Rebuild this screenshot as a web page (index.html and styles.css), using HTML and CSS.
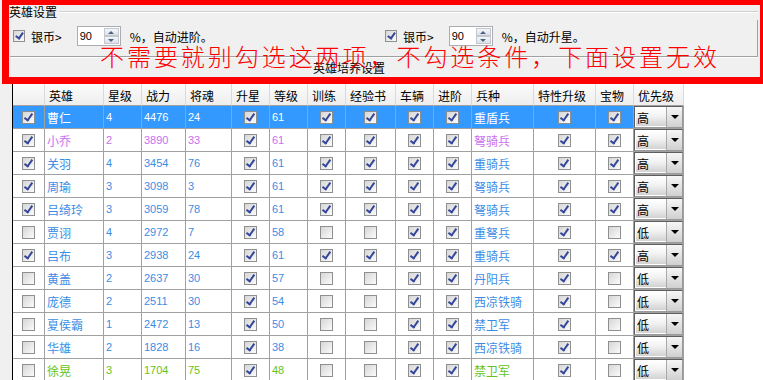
FILE: index.html
```html
<!DOCTYPE html>
<html lang="zh-CN">
<head>
  <meta charset="UTF-8">
  <title>英雄设置</title>
  <link rel="stylesheet" href="styles.css">
</head>
<body>
  <div class="settings">
    <div class="legend-row">
      <span>英雄设置</span>
      <span class="line"></span>
    </div>
    <div class="group-body">
      <div class="option-row">
        <div class="opt-group">
          <span class="cb small on"></span>
          <span class="opt-label">银币&gt;</span>
          <span class="spin"><span class="spin-val">90</span><span class="spin-btns"><i class="up"></i><i class="down"></i></span></span>
          <span class="opt-tail">%，自动进阶。</span>
        </div>
        <div class="opt-group">
          <span class="cb small on"></span>
          <span class="opt-label">银币&gt;</span>
          <span class="spin"><span class="spin-val">90</span><span class="spin-btns"><i class="up"></i><i class="down"></i></span></span>
          <span class="opt-tail">%，自动升星。</span>
        </div>
      </div>
    </div>
    <div class="sep"></div>
    <div class="train-title">英雄培养设置</div>
  </div>

  <div class="grid">
    <div class="row head">
      <div></div><div>英雄</div><div>星级</div><div>战力</div><div>将魂</div><div>升星</div><div>等级</div><div>训练</div><div>经验书</div><div>车辆</div><div>进阶</div><div>兵种</div><div>特性升级</div><div>宝物</div><div>优先级</div>
    </div>

    <div class="row blue sel">
      <div class="c"><span class="cb on"></span></div><div class="t">曹仁</div><div class="n">4</div><div class="n">4476</div><div class="n">24</div>
      <div class="c"><span class="cb on"></span></div><div class="n">61</div>
      <div class="c"><span class="cb on"></span></div><div class="c"><span class="cb on"></span></div><div class="c"><span class="cb on"></span></div><div class="c"><span class="cb on"></span></div>
      <div class="t">重盾兵</div><div class="c"><span class="cb on"></span></div><div class="c"><span class="cb on"></span></div>
      <div class="p"><span class="combo"><span class="combo-val">高</span><span class="combo-btn"></span></span></div>
    </div>
    <div class="row purple">
      <div class="c"><span class="cb on"></span></div><div class="t">小乔</div><div class="n">2</div><div class="n">3890</div><div class="n">33</div>
      <div class="c"><span class="cb on"></span></div><div class="n">61</div>
      <div class="c"><span class="cb on"></span></div><div class="c"><span class="cb on"></span></div><div class="c"><span class="cb on"></span></div><div class="c"><span class="cb on"></span></div>
      <div class="t">弩骑兵</div><div class="c"><span class="cb on"></span></div><div class="c"><span class="cb on"></span></div>
      <div class="p"><span class="combo"><span class="combo-val">高</span><span class="combo-btn"></span></span></div>
    </div>
    <div class="row blue">
      <div class="c"><span class="cb on"></span></div><div class="t">关羽</div><div class="n">4</div><div class="n">3454</div><div class="n">76</div>
      <div class="c"><span class="cb on"></span></div><div class="n">61</div>
      <div class="c"><span class="cb on"></span></div><div class="c"><span class="cb on"></span></div><div class="c"><span class="cb on"></span></div><div class="c"><span class="cb on"></span></div>
      <div class="t">重骑兵</div><div class="c"><span class="cb on"></span></div><div class="c"><span class="cb on"></span></div>
      <div class="p"><span class="combo"><span class="combo-val">高</span><span class="combo-btn"></span></span></div>
    </div>
    <div class="row blue">
      <div class="c"><span class="cb on"></span></div><div class="t">周瑜</div><div class="n">3</div><div class="n">3098</div><div class="n">3</div>
      <div class="c"><span class="cb on"></span></div><div class="n">61</div>
      <div class="c"><span class="cb on"></span></div><div class="c"><span class="cb on"></span></div><div class="c"><span class="cb on"></span></div><div class="c"><span class="cb on"></span></div>
      <div class="t">弩骑兵</div><div class="c"><span class="cb on"></span></div><div class="c"><span class="cb on"></span></div>
      <div class="p"><span class="combo"><span class="combo-val">高</span><span class="combo-btn"></span></span></div>
    </div>
    <div class="row blue">
      <div class="c"><span class="cb on"></span></div><div class="t">吕绮玲</div><div class="n">3</div><div class="n">3059</div><div class="n">78</div>
      <div class="c"><span class="cb on"></span></div><div class="n">61</div>
      <div class="c"><span class="cb on"></span></div><div class="c"><span class="cb on"></span></div><div class="c"><span class="cb on"></span></div><div class="c"><span class="cb on"></span></div>
      <div class="t">弩骑兵</div><div class="c"><span class="cb on"></span></div><div class="c"><span class="cb on"></span></div>
      <div class="p"><span class="combo"><span class="combo-val">高</span><span class="combo-btn"></span></span></div>
    </div>
    <div class="row blue">
      <div class="c"><span class="cb"></span></div><div class="t">贾诩</div><div class="n">4</div><div class="n">2972</div><div class="n">7</div>
      <div class="c"><span class="cb on"></span></div><div class="n">58</div>
      <div class="c"><span class="cb"></span></div><div class="c"><span class="cb"></span></div><div class="c"><span class="cb on"></span></div><div class="c"><span class="cb on"></span></div>
      <div class="t">重弩兵</div><div class="c"><span class="cb on"></span></div><div class="c"><span class="cb"></span></div>
      <div class="p"><span class="combo"><span class="combo-val">低</span><span class="combo-btn"></span></span></div>
    </div>
    <div class="row blue">
      <div class="c"><span class="cb on"></span></div><div class="t">吕布</div><div class="n">3</div><div class="n">2938</div><div class="n">24</div>
      <div class="c"><span class="cb on"></span></div><div class="n">61</div>
      <div class="c"><span class="cb on"></span></div><div class="c"><span class="cb on"></span></div><div class="c"><span class="cb on"></span></div><div class="c"><span class="cb on"></span></div>
      <div class="t">重骑兵</div><div class="c"><span class="cb on"></span></div><div class="c"><span class="cb on"></span></div>
      <div class="p"><span class="combo"><span class="combo-val">高</span><span class="combo-btn"></span></span></div>
    </div>
    <div class="row blue">
      <div class="c"><span class="cb"></span></div><div class="t">黄盖</div><div class="n">2</div><div class="n">2637</div><div class="n">30</div>
      <div class="c"><span class="cb on"></span></div><div class="n">57</div>
      <div class="c"><span class="cb"></span></div><div class="c"><span class="cb"></span></div><div class="c"><span class="cb on"></span></div><div class="c"><span class="cb on"></span></div>
      <div class="t">丹阳兵</div><div class="c"><span class="cb on"></span></div><div class="c"><span class="cb"></span></div>
      <div class="p"><span class="combo"><span class="combo-val">低</span><span class="combo-btn"></span></span></div>
    </div>
    <div class="row blue">
      <div class="c"><span class="cb"></span></div><div class="t">庞德</div><div class="n">2</div><div class="n">2511</div><div class="n">30</div>
      <div class="c"><span class="cb on"></span></div><div class="n">54</div>
      <div class="c"><span class="cb"></span></div><div class="c"><span class="cb"></span></div><div class="c"><span class="cb on"></span></div><div class="c"><span class="cb on"></span></div>
      <div class="t">西凉铁骑</div><div class="c"><span class="cb on"></span></div><div class="c"><span class="cb"></span></div>
      <div class="p"><span class="combo"><span class="combo-val">低</span><span class="combo-btn"></span></span></div>
    </div>
    <div class="row blue">
      <div class="c"><span class="cb"></span></div><div class="t">夏侯霸</div><div class="n">1</div><div class="n">2472</div><div class="n">13</div>
      <div class="c"><span class="cb on"></span></div><div class="n">50</div>
      <div class="c"><span class="cb"></span></div><div class="c"><span class="cb"></span></div><div class="c"><span class="cb on"></span></div><div class="c"><span class="cb on"></span></div>
      <div class="t">禁卫军</div><div class="c"><span class="cb on"></span></div><div class="c"><span class="cb"></span></div>
      <div class="p"><span class="combo"><span class="combo-val">低</span><span class="combo-btn"></span></span></div>
    </div>
    <div class="row blue">
      <div class="c"><span class="cb"></span></div><div class="t">华雄</div><div class="n">2</div><div class="n">1828</div><div class="n">16</div>
      <div class="c"><span class="cb on"></span></div><div class="n">38</div>
      <div class="c"><span class="cb"></span></div><div class="c"><span class="cb"></span></div><div class="c"><span class="cb on"></span></div><div class="c"><span class="cb on"></span></div>
      <div class="t">西凉铁骑</div><div class="c"><span class="cb on"></span></div><div class="c"><span class="cb"></span></div>
      <div class="p"><span class="combo"><span class="combo-val">低</span><span class="combo-btn"></span></span></div>
    </div>
    <div class="row green">
      <div class="c"><span class="cb"></span></div><div class="t">徐晃</div><div class="n">3</div><div class="n">1704</div><div class="n">75</div>
      <div class="c"><span class="cb on"></span></div><div class="n">48</div>
      <div class="c"><span class="cb"></span></div><div class="c"><span class="cb"></span></div><div class="c"><span class="cb on"></span></div><div class="c"><span class="cb on"></span></div>
      <div class="t">禁卫军</div><div class="c"><span class="cb on"></span></div><div class="c"><span class="cb"></span></div>
      <div class="p"><span class="combo"><span class="combo-val">低</span><span class="combo-btn"></span></span></div>
    </div>
  </div>

  <!-- red annotation drawn over the settings box -->
  <div class="note">
    <div class="note-text">不需要就别勾选这两项，不勾选条件，下面设置无效</div>
  </div>
</body>
</html>
```

FILE: styles.css
```css
body {
  margin: 0;
  height: 380px;
  overflow: hidden;
  position: relative;
  background: #f0f0f0;
  font-family: "Noto Sans CJK SC", sans-serif;
  font-size: 12px;
  color: #000;
}
.settings {
  height: 77px;
}
.legend-row {
  display: flex;
  align-items: center;
  height: 16px;
  margin-top: 4px;
  padding-left: 9px;
  width: 749px;
  line-height: 16px;
}
.legend-row .line {
  flex: 1;
  margin-left: 2px;
  border-top: 1px solid #d0d0d0;
  border-bottom: 1px solid #fff;
}
.group-body {
  width: 757px;
  border-right: 1px solid #a0a0a0;
  padding-top: 6px;
  padding-bottom: 10px;
}
.option-row {
  display: flex;
  align-items: center;
  height: 20px;
  padding-left: 13px;
}
.opt-group {
  display: flex;
  align-items: center;
  width: 372px;
}
.opt-label {
  margin-left: 6px;
}
.opt-tail {
  margin-left: 9px;
}
.spin {
  display: flex;
  width: 44px;
  height: 20px;
  box-sizing: border-box;
  margin-left: 15px;
  border: 1px solid #abadb3;
  background: #fff;
}
.spin-val {
  flex: 1;
  padding-left: 2px;
  line-height: 18px;
  font-family: "Liberation Sans", sans-serif;
  font-size: 11px;
}
.spin-btns {
  width: 15px;
  display: flex;
  flex-direction: column;
  padding: 1px 1px 1px 0;
}
.spin-btns i {
  flex: 1;
  display: flex;
  align-items: center;
  justify-content: center;
  border: 1px solid #c3c8d0;
  background: linear-gradient(#f4f6f9, #dde2e8);
}
.spin-btns i::after {
  content: "";
  border-left: 3px solid transparent;
  border-right: 3px solid transparent;
}
.spin-btns .up::after {
  border-bottom: 3px solid #4d6185;
}
.spin-btns .down::after {
  border-top: 3px solid #4d6185;
}
.sep {
  margin-left: 10px;
  width: 748px;
  border-top: 1px solid #a0a0a0;
  border-bottom: 1px solid #fff;
}
.train-title {
  height: 19px;
  line-height: 19px;
  padding-left: 313px;
}

/* checkbox */
.cb {
  display: inline-block;
  position: relative;
  width: 13px;
  height: 13px;
  box-sizing: border-box;
  border: 1px solid #8e8f8f;
  background: linear-gradient(135deg, #d6d6d6, #fbfbfb);
}
.cb.small {
  width: 12px;
  height: 12px;
}
.cb.on::after {
  content: "";
  position: absolute;
  left: 3px;
  top: 0;
  width: 3px;
  height: 7px;
  border: solid #34479a;
  border-width: 0 2px 2px 0;
  transform: rotate(35deg);
}
.cb.small.on::after {
  left: 3px;
  top: 0;
  height: 6px;
}

/* hero grid */
.grid {
  margin-left: 12px;
  height: 303px;
  border-left: 1px solid #000;
  border-top: 1px solid #000;
  background: #fff;
}
.row {
  display: grid;
  grid-template-columns: 32px 59px 38px 44px 46px 38px 38px 38px 50px 38px 38px 62px 62px 38px 50px;
  height: 23px;
}
.row > div {
  display: flex;
  align-items: center;
  box-sizing: border-box;
  padding-left: 2px;
  overflow: hidden;
  white-space: nowrap;
  border-right: 1px solid #a0a0a0;
  border-bottom: 1px solid #a0a0a0;
}
.row.head {
  height: 24px;
  color: #000;
}
.row.head > div {
  padding-left: 4px;
  padding-top: 3px;
  background: linear-gradient(#fdfdfd, #eeeeee);
  border-right-color: #dadada;
}
.row .c {
  justify-content: center;
  padding-left: 0;
}
.row .n {
  font-family: "Liberation Sans", sans-serif;
  font-size: 11px;
}
.row .p {
  padding: 0;
  align-items: stretch;
}
.blue {
  color: #3b8de4;
}
.purple {
  color: #cc6ef0;
}
.green {
  color: #62c41e;
}
.sel > div:not(.p) {
  background: #3399ff;
  color: #fff;
}

/* priority combo */
.combo {
  display: flex;
  flex: 1;
  box-sizing: border-box;
  border: 1px solid;
  border-color: #5e5e5e #9a9a9a #9a9a9a #5e5e5e;
  color: #000;
}
.combo-val {
  flex: 1;
  padding-left: 1px;
  line-height: 20px;
  background: linear-gradient(#ffffff, #f2f2f2 45%, #d2d2d2);
  border: 1px solid #fff;
  border-right: none;
}
.combo-btn {
  width: 15px;
  display: flex;
  align-items: center;
  justify-content: center;
  border-left: 1px solid #a8a8a8;
  background: linear-gradient(#f6f6f6, #d0d0d0);
}
.combo-btn::after {
  content: "";
  border-left: 4px solid transparent;
  border-right: 4px solid transparent;
  border-top: 4px solid #000;
}

/* red annotation */
.note {
  position: absolute;
  left: 2px;
  top: 0;
  width: 763px;
  height: 84px;
  box-sizing: border-box;
  border: solid #ff0000;
  border-width: 5px 5px 7px 7px;
}
.note-text {
  padding-top: 39px;
  padding-left: 91px;
  font-size: 24px;
  font-weight: 300;
  line-height: 24px;
  letter-spacing: 2.95px;
  color: #ff0000;
  white-space: nowrap;
}
```
